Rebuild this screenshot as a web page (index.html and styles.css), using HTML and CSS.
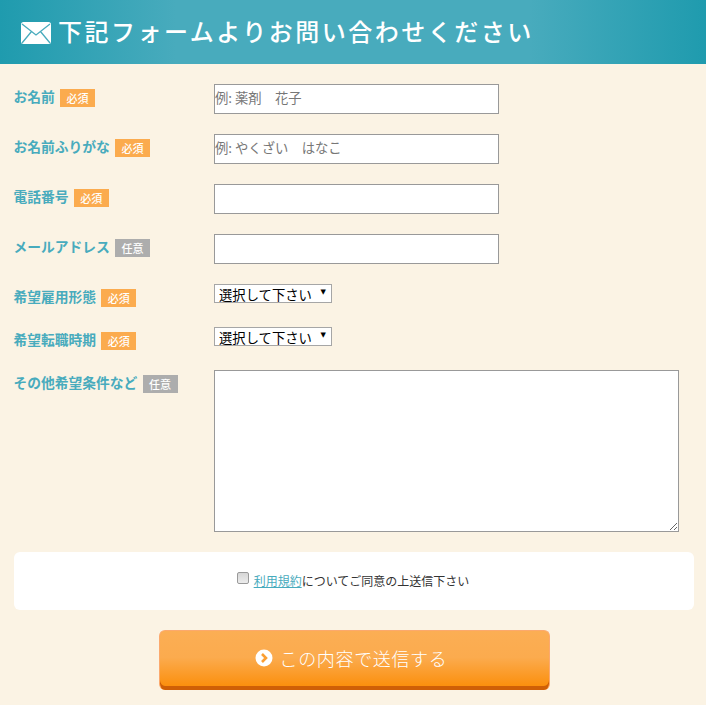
FILE: index.html
```html
<!DOCTYPE html>
<html lang="ja">
<head>
<meta charset="utf-8">
<title>お問い合わせ</title>
<link rel="stylesheet" href="styles.css">
</head>
<body>
<main class="page">
  <header class="head">
    <svg class="mail" viewBox="0 0 30 22" width="30" height="22" aria-hidden="true">
      <rect width="30" height="22" rx="2.5" fill="#fff"/>
      <path d="M1 2l14 11L29 2M1 21l9.5-11.5M29 21l-9.5-11.5" fill="none" stroke="#48abbd" stroke-width="1.3"/>
    </svg>
    <h1 class="title">下記フォームよりお問い合わせください</h1>
  </header>
  <form class="form">
    <div class="row row-input">
      <div class="label"><span class="name">お名前</span><span class="badge req">必須</span></div>
      <input class="text" type="text" placeholder="例: 薬剤　花子">
    </div>
    <div class="row row-input">
      <div class="label"><span class="name">お名前ふりがな</span><span class="badge req">必須</span></div>
      <input class="text" type="text" placeholder="例: やくざい　はなこ">
    </div>
    <div class="row row-input">
      <div class="label"><span class="name">電話番号</span><span class="badge req">必須</span></div>
      <input class="text" type="text">
    </div>
    <div class="row row-input">
      <div class="label"><span class="name">メールアドレス</span><span class="badge opt">任意</span></div>
      <input class="text" type="text">
    </div>
    <div class="row row-select">
      <div class="label"><span class="name">希望雇用形態</span><span class="badge req">必須</span></div>
      <div class="select-wrap"><select class="select"><option>選択して下さい</option></select></div>
    </div>
    <div class="row row-select">
      <div class="label"><span class="name">希望転職時期</span><span class="badge req">必須</span></div>
      <div class="select-wrap"><select class="select"><option>選択して下さい</option></select></div>
    </div>
    <div class="row row-area">
      <div class="label"><span class="name">その他希望条件など</span><span class="badge opt">任意</span></div>
      <textarea class="area"></textarea>
    </div>
    <div class="agree">
      <input class="check" type="checkbox">
      <span class="agree-text"><a href="#">利用規約</a>についてご同意の上送信下さい</span>
    </div>
    <div class="actions">
      <button class="submit" type="button">
        <svg class="arrow" viewBox="0 0 18 18" width="18" height="18" aria-hidden="true">
          <circle cx="9" cy="9" r="8.5" fill="#fff"/>
          <path d="M7 5l4 4-4 4" fill="none" stroke="#fb9f33" stroke-width="2.6"/>
        </svg>
        この内容で送信する
      </button>
    </div>
  </form>
</main>
</body>
</html>
```

FILE: styles.css
```css
* { box-sizing: border-box; }
html, body { margin: 0; padding: 0; background: #fff; }
body { font-family: "Noto Sans CJK JP", "Noto Sans", sans-serif; }
.page { width: 706px; height: 705px; background: #fbf3e4; overflow: hidden; }
.head {
  height: 64px;
  padding-left: 21px;
  display: flex;
  align-items: center;
  gap: 7px;
  background: linear-gradient(90deg, #1f9bae 0%, #48abbd 25%, #48abbd 75%, #1f9bae 100%);
}
.mail { flex: none; margin-top: 1px; }
.title {
  margin: 0 0 3px;
  color: #fff;
  font-size: 24px;
  line-height: 32px;
  font-weight: 500;
  letter-spacing: 2.5px;
  white-space: nowrap;
}
.form { padding: 20px 12px 0 14px; }
.row { display: flex; align-items: flex-start; }
.row-input { height: 30px; margin-bottom: 20px; }
.row-select { height: 19px; margin-bottom: 24px; }
.row-area { height: 162px; margin-bottom: 20px; }
.label {
  width: 200px;
  flex: none;
  margin-top: 5px;
  display: flex;
  align-items: flex-start;
  color: #48abbd;
  font-size: 13.78px;
  font-weight: 700;
  white-space: nowrap;
}
.name { line-height: 15px; margin-left: -0.5px; }
.badge {
  width: 35px;
  height: 18px;
  margin-left: 5.2px;
  color: #fff;
  font-size: 11px;
  font-weight: 500;
  line-height: 18px;
  text-align: center;
}
.req { background: #fbab4e; }
.opt { background: #adadad; }
.text {
  width: 285px;
  height: 30px;
  padding: 0 0 3px;
  border: 1px solid #999;
  border-radius: 0;
  background: #fff;
  font: 13.33px/20px "Noto Sans CJK JP", sans-serif;
  outline: none;
}
.text::placeholder { color: #777; opacity: 1; }
.select-wrap { position: relative; width: 118px; height: 19px; }
.select-wrap::after {
  content: "▼";
  position: absolute;
  top: 1px;
  right: 6px;
  color: #000;
  font: 7px/15px "DejaVu Sans", sans-serif;
  pointer-events: none;
}
.select {
  display: block;
  width: 118px;
  height: 19px;
  padding: 1px 0 0 4px;
  border: 1px solid #a6a6a6;
  border-radius: 0;
  background: #fff;
  color: #000;
  font: 13.33px/17px "Noto Sans CJK JP", sans-serif;
  appearance: none;
  -webkit-appearance: none;
}
.area {
  display: block;
  width: 465px;
  height: 162px;
  padding: 0;
  border: 1px solid #999;
  border-radius: 0;
  background: #fff;
  outline: none;
}
.agree {
  height: 58px;
  width: 680px;
  display: flex;
  align-items: center;
  justify-content: center;
  gap: 5px;
  padding-right: 2px;
  background: #fff;
  border-radius: 6px;
}
.check {
  width: 12px;
  height: 12px;
  margin: 0 0 7px;
  appearance: none;
  -webkit-appearance: none;
  border: 1px solid #9a9a9a;
  border-radius: 2px;
  background: linear-gradient(180deg, #d6d6d6, #ececec);
}
.agree-text { color: #333; font-size: 12px; line-height: 18px; }
.agree-text a { color: #48abbd; text-decoration: underline; }
.actions { display: flex; justify-content: center; padding: 20px 0 0; }
.submit {
  width: 391px;
  height: 60px;
  display: flex;
  align-items: center;
  justify-content: center;
  gap: 7px;
  border: 1px solid #fba96d;
  border-bottom: 0;
  border-radius: 6px;
  background: linear-gradient(180deg, #fbae54 0%, #fbab4e 45%, #fb900f 92%);
  box-shadow: inset 0 -4px 0 #cf5f06;
  color: #fff;
  font: 300 18px/24px "Noto Sans CJK JP", sans-serif;
  letter-spacing: 0.65px;
  padding: 0 6px 5px 0;
}
.arrow { flex: none; }
```
